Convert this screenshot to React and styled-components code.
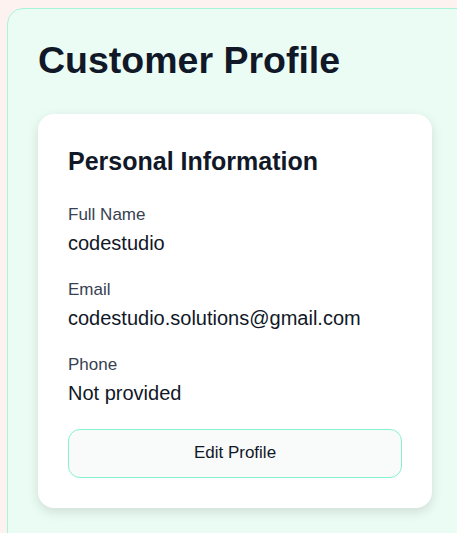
import styled, { createGlobalStyle } from "styled-components";

const Global = createGlobalStyle`
    body {
        margin: 0;
        background: #fef2f1;
        font-family: "Liberation Sans", Arial, sans-serif;
        overflow: hidden;
    }
`;

const Page = styled.div`
    padding: 8px 0 0 7px;
`;

const Panel = styled.section`
    width: 480px;
    min-height: 600px;
    box-sizing: border-box;
    padding: 30px;
    background: #ebfcf4;
    border: 1px solid #a8f5d8;
    border-radius: 16px;
`;

const Title = styled.h1`
    margin: 0 0 32px;
    font-size: 37.5px;
    font-weight: 700;
    color: #111827;
`;

const Card = styled.div`
    width: 394px;
    box-sizing: border-box;
    padding: 33px 30px 30px;
    background: #ffffff;
    border-radius: 16px;
    box-shadow: 0 4px 12px rgba(0, 0, 0, 0.12);
`;

const Heading = styled.h2`
    margin: 0 0 29px;
    font-size: 25px;
    font-weight: 700;
    color: #111827;
`;

const Fields = styled.div`
    display: flex;
    flex-direction: column;
    gap: 25.5px;
`;

const Field = styled.div`
    display: flex;
    flex-direction: column;
    gap: 6.5px;
`;

const Label = styled.span`
    font-size: 17px;
    color: #374151;
`;

const Value = styled.span`
    font-size: 20px;
    color: #111827;
`;

const Button = styled.button`
    width: 100%;
    height: 49px;
    margin-top: 24px;
    font-family: inherit;
    font-size: 17px;
    color: #111827;
    background: #f9fafa;
    border: 1px solid #84f2cf;
    border-radius: 12px;
    cursor: pointer;
`;

const fields = [
    { label: "Full Name", value: "codestudio" },
    { label: "Email", value: "codestudio.solutions@gmail.com" },
    { label: "Phone", value: "Not provided" },
];

const App = () => {
    return (
        <Page>
            <Global />
            <Panel>
                <Title>Customer Profile</Title>
                <Card>
                    <Heading>Personal Information</Heading>
                    <Fields>
                        {fields.map((f) => (
                            <Field key={f.label}>
                                <Label>{f.label}</Label>
                                <Value>{f.value}</Value>
                            </Field>
                        ))}
                    </Fields>
                    <Button>Edit Profile</Button>
                </Card>
            </Panel>
        </Page>
    );
};

export default App;
